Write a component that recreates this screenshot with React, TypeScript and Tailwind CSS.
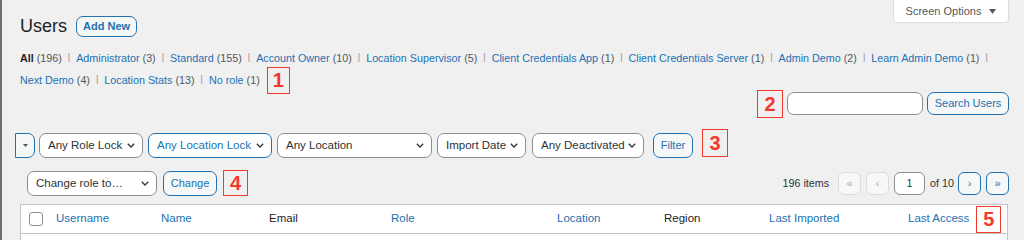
const roles1 = [
  { label: "Administrator", count: 3 },
  { label: "Standard", count: 155 },
  { label: "Account Owner", count: 10 },
  { label: "Location Supervisor", count: 5 },
  { label: "Client Credentials App", count: 1 },
  { label: "Client Credentials Server", count: 1 },
  { label: "Admin Demo", count: 2 },
  { label: "Learn Admin Demo", count: 1 },
];

const roles2 = [
  { label: "Next Demo", count: 4 },
  { label: "Location Stats", count: 13 },
  { label: "No role", count: 1 },
];

const Sep = () => <span className="mx-[6px] text-[9px] text-[#8c8f94]">|</span>;

const Marker = ({ n, className = "" }: { n: number; className?: string }) => (
  <div
    className={`flex shrink-0 items-center justify-center border border-[#f03a2e] text-[20px] font-bold leading-none text-[#f03a2e] ${className}`}
  >
    {n}
  </div>
);

const Chevron = () => (
  <svg width="8" height="5" viewBox="0 0 8 5" className="shrink-0">
    <polyline points="0.8,0.8 4,4 7.2,0.8" fill="none" stroke="#2c3338" strokeWidth="1.3" />
  </svg>
);

const Select = ({
  label,
  width,
  active = false,
}: {
  label: string;
  width: string;
  active?: boolean;
}) => (
  <div
    className={`flex h-[25px] shrink-0 items-center justify-between rounded-[7px] border bg-white pl-[8px] pr-[7px] text-[11.5px] ${width} ${
      active ? "border-[#2271b1] text-[#2271b1]" : "border-[#8c8f94] text-[#2c3338]"
    }`}
  >
    <span className="whitespace-nowrap">{label}</span>
    <Chevron />
  </div>
);

const PageBtn = ({ glyph, disabled = false }: { glyph: string; disabled?: boolean }) => (
  <div
    className={`flex h-[23px] w-[23px] shrink-0 items-center justify-center rounded-[6px] border bg-[#f6f7f7] text-[11px] ${
      disabled ? "border-[#dcdcde] text-[#a7aaad]" : "border-[#2271b1] text-[#2271b1]"
    }`}
  >
    {glyph}
  </div>
);

const columns = [
  { label: "Username", w: "w-[105px]", link: true },
  { label: "Name", w: "w-[108px]", link: true },
  { label: "Email", w: "w-[122px]", link: false },
  { label: "Role", w: "w-[166px]", link: true },
  { label: "Location", w: "w-[107px]", link: true },
  { label: "Region", w: "w-[105px]", link: false },
  { label: "Last Imported", w: "w-[139px]", link: true },
];

export default function App() {
  return (
    <div className="h-[240px] w-[1024px] overflow-hidden border-l-2 border-[#6b6e72] bg-[#f0f0f1] pl-[18px] pr-[15px] font-['Liberation_Sans',Arial,sans-serif] text-[#2c3338]">
      {/* Header */}
      <div className="flex h-[42px] items-start justify-between">
        <div className="mt-[14px] flex h-[24px] items-center gap-[9px]">
          <h1 className="text-[18px] leading-[24px] font-normal text-[#1d2327]">Users</h1>
          <div className="flex h-[21px] items-center rounded-[7px] border border-[#2271b1] bg-[#f6f7f7] px-[6px] text-[11px] font-bold text-[#2271b1]">
            Add New
          </div>
        </div>
        <div className="flex h-[23px] w-[116px] items-center justify-center gap-[8px] rounded-b-[4px] border border-t-0 border-[#dcdcde] bg-white text-[11px] text-[#50575e]">
          Screen Options
          <svg width="7" height="5" viewBox="0 0 7 5">
            <polygon points="0,0 7,0 3.5,5" fill="#50575e" />
          </svg>
        </div>
      </div>

      {/* Role filters */}
      <div className="mt-[5px] text-[10.75px] text-[#50575e]">
        <div className="flex h-[22px] items-center whitespace-nowrap">
          <span className="font-bold text-[#1d2327]">All</span>
          <span className="ml-[3px]">(196)</span>
          {roles1.map((r) => (
            <span key={r.label} className="flex items-center">
              <Sep />
              <span className="text-[#2271b1]">{r.label}</span>
              <span className="ml-[3px]">({r.count})</span>
            </span>
          ))}
          <Sep />
        </div>
        <div className="flex h-[22px] items-center whitespace-nowrap">
          {roles2.map((r, i) => (
            <span key={r.label} className="flex items-center">
              {i > 0 && <Sep />}
              <span className="text-[#2271b1]">{r.label}</span>
              <span className="ml-[3px]">({r.count})</span>
            </span>
          ))}
          <Marker n={1} className="ml-[7px] h-[27px] w-[23px]" />
        </div>
      </div>

      {/* Search */}
      <div className="mt-[1px] flex h-[23px] items-center justify-end gap-[4px]">
        <Marker n={2} className="h-[28px] w-[26px]" />
        <div className="h-[23px] w-[136px] rounded-[7px] border border-[#8c8f94] bg-white" />
        <div className="flex h-[23px] w-[82px] items-center justify-center rounded-[7px] border border-[#2271b1] bg-[#f6f7f7] text-[11px] text-[#2271b1]">
          Search Users
        </div>
      </div>

      {/* Filters */}
      <div className="mt-[18px] -ml-[5px] flex h-[25px] items-center">
        <div className="flex h-[25px] w-[20px] shrink-0 items-center justify-center rounded-r-[7px] border border-[#2271b1] bg-[#f6f7f7]">
          <svg width="5" height="3" viewBox="0 0 5 3">
            <polygon points="0,0 5,0 2.5,3" fill="#50575e" />
          </svg>
        </div>
        <div className="ml-[4px] flex items-center gap-[5px]">
          <Select label="Any Role Lock" width="w-[104px]" />
          <Select label="Any Location Lock" width="w-[124px]" active />
          <Select label="Any Location" width="w-[155px]" />
          <Select label="Import Date" width="w-[89px]" />
        </div>
        <div className="ml-[6px]">
          <Select label="Any Deactivated" width="w-[112px]" />
        </div>
        <div className="ml-[9px] flex h-[25px] w-[40px] items-center justify-center rounded-[7px] border border-[#2271b1] bg-[#f6f7f7] text-[11px] text-[#2271b1]">
          Filter
        </div>
        <Marker n={3} className="mb-[5px] ml-[9px] h-[28px] w-[26px]" />
      </div>

      {/* Bulk actions + pagination */}
      <div className="mt-[13px] flex h-[25px] items-center justify-between">
        <div className="ml-[7px] flex items-center gap-[6px]">
          <Select label="Change role to…" width="w-[130px]" />
          <div className="flex h-[25px] w-[54px] items-center justify-center rounded-[7px] border border-[#2271b1] bg-[#f6f7f7] text-[11px] text-[#2271b1]">
            Change
          </div>
          <Marker n={4} className="mb-[2px] h-[26px] w-[25px]" />
        </div>
        <div className="flex items-center text-[10.75px] text-[#2c3338]">
          <span className="mr-[9px]">196 items</span>
          <PageBtn glyph="«" disabled />
          <div className="ml-[5px]">
            <PageBtn glyph="‹" disabled />
          </div>
          <div className="ml-[5px] flex h-[23px] w-[31px] items-center justify-center rounded-[6px] border border-[#8c8f94] bg-white">
            1
          </div>
          <span className="ml-[5px] mr-[4px]">of 10</span>
          <PageBtn glyph="›" />
          <div className="ml-[5px]">
            <PageBtn glyph="»" />
          </div>
        </div>
      </div>

      {/* Table */}
      <div className="mt-[8px] mr-[1px] border border-[#c3c4c7] bg-white">
        <div className="flex h-[29px] items-center border-b border-[#c3c4c7] text-[11.5px]">
          <div className="ml-[8px] mr-[13px] h-[14px] w-[14px] shrink-0 rounded-[3px] border border-[#8c8f94] bg-white" />
          {columns.map((c) => (
            <div
              key={c.label}
              className={`${c.w} shrink-0 whitespace-nowrap ${c.link ? "text-[#2271b1]" : "text-[#1d2327]"}`}
            >
              {c.label}
            </div>
          ))}
          <div className="shrink-0 whitespace-nowrap text-[#2271b1]">Last Access</div>
          <Marker n={5} className="ml-[7px] h-[27px] w-[25px]" />
        </div>
        <div className="h-[20px]" />
      </div>
    </div>
  );
}
